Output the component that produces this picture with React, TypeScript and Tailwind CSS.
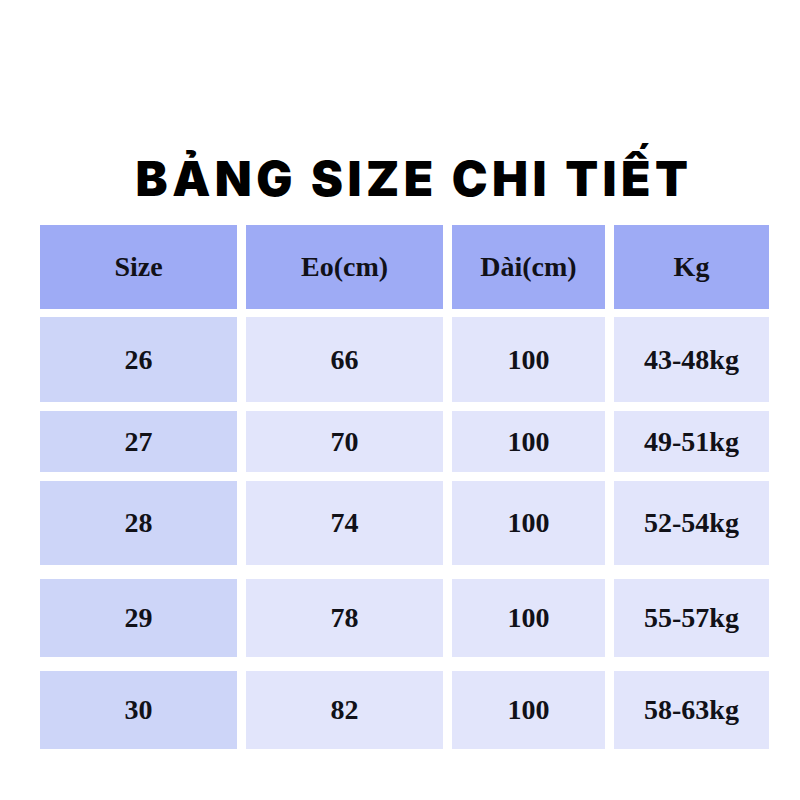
const header = ['Size', 'Eo(cm)', 'Dài(cm)', 'Kg'];

const rows = [
  { cells: ['26', '66', '100', '43-48kg'], h: 'h-[85px]', mt: 'mt-[8px]' },
  { cells: ['27', '70', '100', '49-51kg'], h: 'h-[61px]', mt: 'mt-[9px]' },
  { cells: ['28', '74', '100', '52-54kg'], h: 'h-[84px]', mt: 'mt-[9px]' },
  { cells: ['29', '78', '100', '55-57kg'], h: 'h-[78px]', mt: 'mt-[14px]' },
  { cells: ['30', '82', '100', '58-63kg'], h: 'h-[78px]', mt: 'mt-[14px]' },
];

const cols = 'grid grid-cols-[197px_197px_153px_155px] gap-x-[9px]';
const cellText =
  "flex items-center justify-center font-['Liberation_Serif',serif] font-bold text-[28px] text-[#111118]";

export default function App() {
  return (
    <div className="w-[800px] h-[800px] bg-white flex flex-col items-start pt-[155px] pl-[40px]">
      <h1 className="w-[730px] text-center font-['Inter',sans-serif] font-black text-[48px] leading-none tracking-[4.5px] text-black pl-[18px]">
        BẢNG SIZE CHI TIẾT
      </h1>

      <div className="mt-[22px] flex flex-col">
        {/* header */}
        <div className={`${cols} h-[84px]`}>
          {header.map((t) => (
            <div key={t} className={`${cellText} bg-[#9eabf5]`}>
              {t}
            </div>
          ))}
        </div>

        {/* body rows */}
        {rows.map((r) => (
          <div key={r.cells[0]} className={`${cols} ${r.h} ${r.mt}`}>
            {r.cells.map((c, i) => (
              <div
                key={i}
                className={`${cellText} ${i === 0 ? 'bg-[#cdd5f8]' : 'bg-[#e2e5fb]'}`}
              >
                {c}
              </div>
            ))}
          </div>
        ))}
      </div>
    </div>
  );
}
